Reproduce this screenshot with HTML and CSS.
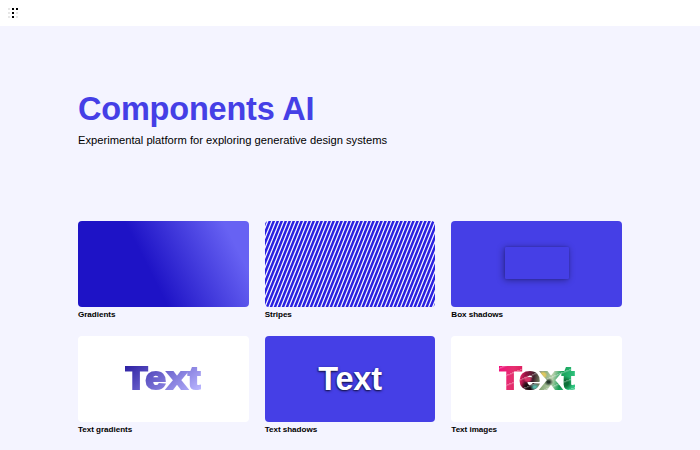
FILE: index.html
```html
<!DOCTYPE html>
<html lang="en">
<head>
<meta charset="utf-8">
<title>Components AI</title>
<link rel="stylesheet" href="styles.css">
</head>
<body>
<header class="bar">
  <svg class="logo" width="10" height="10" viewBox="0 0 10 10" shape-rendering="crispEdges">
    <path fill="#e6e6e6" d="M0 0h2v2H0zM0 4h2v2H0zM0 8h2v2H0zM8 4h2v2H8zM8 8h2v2H8z"/>
    <path fill="#000" d="M4 0h2v2H4zM8 0h2v2H8zM4 4h2v2H4zM4 8h2v2H4z"/>
  </svg>
</header>
<main class="page">
  <h1 class="title">Components AI</h1>
  <p class="subtitle">Experimental platform for exploring generative design systems</p>
  <section class="grid">
    <a class="item"><div class="card gradient"></div><span class="label">Gradients</span></a>
    <a class="item"><div class="card stripes"></div><span class="label">Stripes</span></a>
    <a class="item"><div class="card solid"><div class="box"></div></div><span class="label">Box shadows</span></a>
    <a class="item"><div class="card white"><span class="word heavy fade">Text</span></div><span class="label">Text gradients</span></a>
    <a class="item"><div class="card solid"><span class="word shadow">Text</span></div><span class="label">Text shadows</span></a>
    <a class="item"><div class="card white"><span class="word heavy floral">Text</span></div><span class="label">Text images</span></a>
  </section>
</main>
</body>
</html>
```
FILE: styles.css
```css
* { box-sizing: border-box; }
html { overflow: hidden; }
body {
  margin: 0;
  background: #f4f4ff;
  color: #000;
  font-family: "Liberation Sans", Arial, sans-serif;
}
.bar { height: 26px; padding: 8px; background: #fff; }
.logo { display: block; }
.page { padding: 63px 78px 0; }
.title {
  margin: 0;
  font-size: 32.5px;
  line-height: 40px;
  letter-spacing: -.2px;
  color: #453fe6;
}
.subtitle { margin: 4px 0 0; font-size: 11.2px; line-height: 14px; }
.grid {
  display: grid;
  grid-template-columns: repeat(3, 1fr);
  column-gap: 16px;
  row-gap: 16px;
  margin-top: 73.5px;
}
.item { display: block; height: 99px; }
.card {
  height: 86px;
  border-radius: 4px;
  display: flex;
  align-items: center;
  justify-content: center;
}
.label {
  display: block;
  margin-top: 2px;
  font-size: 8.1px;
  line-height: 11px;
  letter-spacing: -.04px;
  font-weight: 700;
}
.gradient { background: linear-gradient(63deg, #1e13c6 0%, #1e13c6 42%, #6762f3 88%, #6762f3 100%); }
.stripes { background: repeating-linear-gradient(112deg, #2a20e0 0, #2a20e0 1.5px, #f4f4ff 2.5px, #f4f4ff 2.8px, #2a20e0 3.7px); }
.solid { background: #453fe6; }
.white { background: #fff; }
.box {
  width: 64px;
  height: 32px;
  margin-bottom: 1px;
  border-radius: 1px;
  background: #453fe6;
  box-shadow: 0 0 2px rgba(0, 0, 0, .2), -1px 1px 7px rgba(0, 0, 0, .4);
}
.word { padding-bottom: 1px; font-size: 32.5px; line-height: 40px; font-weight: 700; letter-spacing: -.2px; }
.shadow { padding-bottom: 0; color: #fff; text-shadow: 0 1px 3px rgba(0, 0, 0, .6), -1px 1px 1px rgba(0, 0, 0, .35); }
.heavy {
  font-size: 32px;
  color: transparent;
  -webkit-text-stroke: 2px transparent;
  -webkit-background-clip: text;
  background-clip: text;
  letter-spacing: .6px;
  transform: scaleX(1.16);
}
.fade { background-image: linear-gradient(135deg, #3023a5 10%, #b9b5ff 90%); }
.floral {
  background-image:
    repeating-linear-gradient(155deg, rgba(255, 255, 255, .3) 0 .5px, transparent 2px 9px),
    radial-gradient(circle at 38px 17px, #e0c860 0 2px, transparent 4px),
    radial-gradient(circle at 31px 29px, #58b8a8 0 1px, transparent 4px),
    radial-gradient(circle at 25px 21px, #d83468 0 2px, transparent 4px),
    radial-gradient(circle at 26px 29px, #1a0c10 0 3px, transparent 7px),
    radial-gradient(circle at 43px 24px, #26382c 0 1px, transparent 4px),
    radial-gradient(circle at 57px 25px, #0d7038 0 3px, transparent 7px),
    linear-gradient(100deg, #f20a7e 0%, #e5306f 20%, #e02060 30%, #8c123f 36%, #40242e 46%, #88a878 57%, #b8d0ac 68%, #18a058 78%, #38cf8c 100%);
}
```
